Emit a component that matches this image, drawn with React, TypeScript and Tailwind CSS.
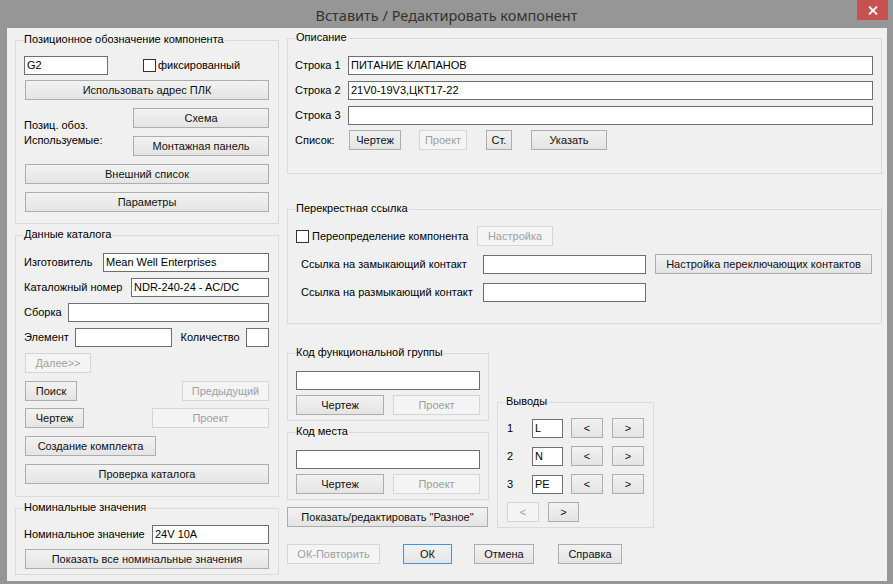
import React from "react";

type BtnProps = {
  children: React.ReactNode;
  className?: string;
  disabled?: boolean;
  primary?: boolean;
};

function Btn({ children, className = "", disabled, primary }: BtnProps) {
  const look = disabled
    ? "border-[#d5d5d5] bg-[#f4f4f4] text-[#a0a0a0]"
    : primary
    ? "border-[#3f95e6] bg-gradient-to-b from-[#f2f2f2] to-[#e5e5e5] text-[#111111]"
    : "border-[#adadad] bg-gradient-to-b from-[#f2f2f2] to-[#e4e4e4] text-[#111111]";
  return (
    <button
      disabled={disabled}
      className={`h-[20px] shrink-0 border flex items-center justify-center font-normal leading-[13px] ${look} ${className}`}
    >
      {children}
    </button>
  );
}

function Field({ value = "", className = "" }: { value?: string; className?: string }) {
  return (
    <div
      className={`h-[19px] shrink-0 border border-[#6e6e6e] bg-white pl-[2px] flex items-center leading-[13px] text-black ${className}`}
    >
      {value}
    </div>
  );
}

function Check() {
  return <span className="w-[13px] h-[13px] shrink-0 border border-[#333333] bg-white" />;
}

function Group({
  title,
  className = "",
  children,
}: {
  title: string;
  className?: string;
  children?: React.ReactNode;
}) {
  return (
    <div className={`relative shrink-0 border border-[#dadada] flex flex-col ${className}`}>
      <span className="absolute -top-[8px] left-[7px] bg-[#f0f0f0] px-[1px] leading-[13px] text-black">
        {title}
      </span>
      {children}
    </div>
  );
}

function LeftColumn() {
  return (
    <div className="ml-[8px] w-[264px] shrink-0 flex flex-col pt-[12px]">
      {/* Позиционное обозначение */}
      <Group title="Позиционное обозначение компонента" className="h-[184px] pl-[8px] pr-[9px] pt-[15px]">
        <div className="flex items-center h-[19px]">
          <Field value="G2" className="w-[84px]" />
          <div className="ml-[35px] flex items-center">
            <Check />
            <span className="ml-[2px]">фиксированный</span>
          </div>
        </div>
        <Btn className="ml-[1px] mt-[5px]">Использовать адрес ПЛК</Btn>
        <div className="flex mt-[8px]">
          <div className="w-[109px] pt-[10px] leading-[15px]">
            <div>Позиц. обоз.</div>
            <div>Используемые:</div>
          </div>
          <div className="flex flex-col flex-1">
            <Btn>Схема</Btn>
            <Btn className="mt-[8px]">Монтажная панель</Btn>
          </div>
        </div>
        <Btn className="ml-[1px] mt-[8px]">Внешний список</Btn>
        <Btn className="ml-[1px] mt-[8px]">Параметры</Btn>
      </Group>

      {/* Данные каталога */}
      <Group title="Данные каталога" className="mt-[11px] h-[262px] pl-[8px] pr-[9px] pt-[17px]">
        <div className="flex items-center justify-between">
          <span>Изготовитель</span>
          <Field value="Mean Well Enterprises" className="w-[166px]" />
        </div>
        <div className="flex items-center justify-between mt-[6px]">
          <span>Каталожный номер</span>
          <Field value="NDR-240-24 - AC/DC" className="w-[138px]" />
        </div>
        <div className="flex items-center justify-between mt-[6px]">
          <span>Сборка</span>
          <Field className="w-[201px]" />
        </div>
        <div className="flex items-center mt-[6px]">
          <span className="w-[51px]">Элемент</span>
          <Field className="w-[97px]" />
          <span className="ml-[9px] w-[66px]">Количество</span>
          <Field className="w-[23px]" />
        </div>
        <Btn disabled className="ml-[1px] mt-[6px] w-[66px]">
          Далее&gt;&gt;
        </Btn>
        <div className="flex justify-between ml-[1px] mt-[8px]">
          <Btn className="w-[52px]">Поиск</Btn>
          <Btn disabled className="w-[87px]">
            Предыдущий
          </Btn>
        </div>
        <div className="flex justify-between ml-[1px] mt-[7px]">
          <Btn className="w-[59px]">Чертеж</Btn>
          <Btn disabled className="w-[117px]">
            Проект
          </Btn>
        </div>
        <Btn className="ml-[1px] mt-[8px] w-[131px]">Создание комплекта</Btn>
        <Btn className="ml-[1px] mt-[8px]">Проверка каталога</Btn>
      </Group>

      {/* Номинальные значения */}
      <Group title="Номинальные значения" className="mt-[11px] h-[67px] pl-[8px] pr-[9px] pt-[16px]">
        <div className="flex items-center justify-between">
          <span>Номинальное значение</span>
          <Field value="24V 10A" className="w-[117px]" />
        </div>
        <Btn className="ml-[1px] mt-[5px]">Показать все номинальные значения</Btn>
      </Group>
    </div>
  );
}

function CodeGroup({ title, className = "" }: { title: string; className?: string }) {
  return (
    <Group title={title} className={`h-[68px] pl-[8px] pt-[17px] ${className}`}>
      <Field className="w-[184px]" />
      <div className="flex mt-[5px]">
        <Btn className="w-[88px]">Чертеж</Btn>
        <Btn disabled className="ml-[9px] w-[87px]">
          Проект
        </Btn>
      </div>
    </Group>
  );
}

function PinRow({ n, value, className = "" }: { n: string; value: string; className?: string }) {
  return (
    <div className={`flex items-center ${className}`}>
      <span className="w-[25px]">{n}</span>
      <Field value={value} className="w-[31px]" />
      <Btn className="ml-[8px] w-[32px]">&lt;</Btn>
      <Btn className="ml-[9px] w-[32px]">&gt;</Btn>
    </div>
  );
}

function RightColumn() {
  return (
    <div className="ml-[8px] w-[595px] shrink-0 flex flex-col pt-[10px]">
      {/* Описание */}
      <Group title="Описание" className="h-[136px] pl-[7px] pr-[8px] pt-[17px]">
        {[
          ["Строка 1", "ПИТАНИЕ КЛАПАНОВ"],
          ["Строка 2", "21V0-19V3,ЦКТ17-22"],
          ["Строка 3", ""],
        ].map(([label, value], i) => (
          <div key={label} className={`flex items-center justify-between ${i ? "mt-[6px]" : ""}`}>
            <span>{label}</span>
            <Field value={value} className="w-[525px]" />
          </div>
        ))}
        <div className="flex items-center mt-[5px]">
          <span className="w-[54px]">Список:</span>
          <Btn className="w-[52px]">Чертеж</Btn>
          <Btn disabled className="ml-[18px] w-[48px]">
            Проект
          </Btn>
          <Btn className="ml-[19px] w-[26px]">Ст.</Btn>
          <Btn className="ml-[19px] w-[76px]">Указать</Btn>
        </div>
      </Group>

      {/* Перекрестная ссылка */}
      <Group title="Перекрестная ссылка" className="mt-[35px] h-[115px] pl-[7px] pt-[16px]">
        <div className="flex items-center">
          <div className="w-[182px] flex items-center pl-[1px]">
            <Check />
            <span className="ml-[3px]">Переопределение компонента</span>
          </div>
          <Btn disabled className="w-[76px]">
            Настройка
          </Btn>
        </div>
        <div className="flex items-center mt-[8px]">
          <span className="w-[188px] pl-[6px]">Ссылка на замыкающий контакт</span>
          <Field className="w-[163px]" />
          <Btn className="ml-[9px] w-[217px]">Настройка переключающих контактов</Btn>
        </div>
        <div className="flex items-center mt-[9px]">
          <span className="w-[188px] pl-[6px]">Ссылка на размыкающий контакт</span>
          <Field className="w-[163px]" />
        </div>
      </Group>

      {/* Коды и выводы */}
      <div className="flex items-start mt-[29px]">
        <div className="w-[202px] flex flex-col">
          <CodeGroup title="Код функциональной группы" />
          <CodeGroup title="Код места" className="mt-[11px]" />
          <Btn className="mt-[7px] w-[201px]">Показать/редактировать "Разное"</Btn>
        </div>
        <Group title="Выводы" className="ml-[8px] mt-[49px] w-[157px] h-[126px] pl-[9px] pt-[15px]">
          <PinRow n="1" value="L" />
          <PinRow n="2" value="N" className="mt-[8px]" />
          <PinRow n="3" value="PE" className="mt-[8px]" />
          <div className="flex mt-[8px]">
            <Btn disabled className="w-[32px]">
              &lt;
            </Btn>
            <Btn className="ml-[9px] w-[31px]">&gt;</Btn>
          </div>
        </Group>
      </div>

      <div className="flex mt-[16px]">
        <Btn disabled className="w-[93px]">
          ОК-Повторить
        </Btn>
        <Btn primary className="ml-[23px] w-[49px]">
          ОК
        </Btn>
        <Btn className="ml-[22px] w-[60px]">Отмена</Btn>
        <Btn className="ml-[24px] w-[64px]">Справка</Btn>
      </div>
    </div>
  );
}

export default function App() {
  return (
    <div className="w-[893px] h-[584px] bg-[#969696] flex flex-col overflow-hidden font-['Liberation_Sans',Arial,sans-serif] text-[11px] text-black">
      <div className="relative h-[28px] shrink-0 flex items-center justify-center">
        <span className="font-['Noto_Sans',sans-serif] text-[14.5px] leading-[20px] text-[#333333] mt-[1px]">
          Вставить / Редактировать компонент
        </span>
        <div className="absolute right-[5px] top-0 w-[31px] h-[20px] bg-[#c75050] flex items-center justify-center">
          <svg width="10" height="9" viewBox="0 0 10 9">
            <path d="M1 0.5 L9 8.5 M9 0.5 L1 8.5" stroke="white" strokeWidth="1.8" />
          </svg>
        </div>
      </div>
      <div className="ml-[7px] mr-[6px] h-[553px] shrink-0 bg-[#f0f0f0] flex">
        <LeftColumn />
        <RightColumn />
      </div>
    </div>
  );
}
